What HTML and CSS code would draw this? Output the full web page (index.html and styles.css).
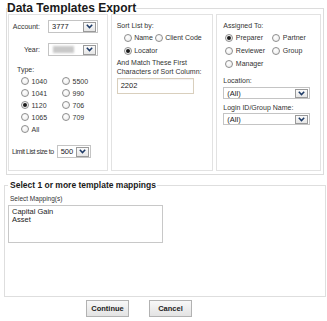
FILE: index.html
```html
<!DOCTYPE html>
<html>
<head>
<meta charset="utf-8">
<link rel="stylesheet" href="styles.css">
</head>
<body>
<div class="page">
  <fieldset class="main">
    <legend>Data Templates Export</legend>
    <div class="cols">
      <div class="col col1">
        <div class="frow">
          <span class="flbl">Account:</span>
          <div class="sel w50"><span class="val">3777</span><span class="dd"><svg width="7" height="5" viewBox="0 0 7 5"><polyline points="0.8,0.8 3.5,3.6 6.2,0.8" fill="none" stroke="#1d3a66" stroke-width="1.5"/></svg></span></div>
        </div>
        <div class="frow yr">
          <span class="flbl">Year:</span>
          <div class="sel w50"><span class="blur"></span><span class="dd"><svg width="7" height="5" viewBox="0 0 7 5"><polyline points="0.8,0.8 3.5,3.6 6.2,0.8" fill="none" stroke="#1d3a66" stroke-width="1.5"/></svg></span></div>
        </div>
        <div class="typelbl">Type:</div>
        <div class="rgrid">
          <label class="rad"><span class="dot"></span>1040</label>
          <label class="rad"><span class="dot"></span>5500</label>
          <label class="rad"><span class="dot"></span>1041</label>
          <label class="rad"><span class="dot"></span>990</label>
          <label class="rad"><span class="dot on"></span>1120</label>
          <label class="rad"><span class="dot"></span>706</label>
          <label class="rad"><span class="dot"></span>1065</label>
          <label class="rad"><span class="dot"></span>709</label>
          <label class="rad"><span class="dot"></span>All</label>
        </div>
        <div class="limit">
          <span class="limlbl">Limit List size to</span>
          <div class="sel w34"><span class="val">500</span><span class="dd"><svg width="7" height="5" viewBox="0 0 7 5"><polyline points="0.8,0.8 3.5,3.6 6.2,0.8" fill="none" stroke="#1d3a66" stroke-width="1.5"/></svg></span></div>
        </div>
      </div>
      <div class="col col2">
        <div class="hlbl">Sort List by:</div>
        <div class="rgrid2">
          <label class="rad r13"><span class="dot"></span>Name</label>
          <label class="rad r13"><span class="dot"></span>Client Code</label>
          <label class="rad r13"><span class="dot on"></span>Locator</label>
        </div>
        <div class="para">And Match These First<br>Characters of Sort Column:</div>
        <div class="txt">2202</div>
      </div>
      <div class="col col3">
        <div class="hlbl">Assigned To:</div>
        <div class="rgrid3">
          <label class="rad r13"><span class="dot on"></span>Preparer</label>
          <label class="rad r13"><span class="dot"></span>Partner</label>
          <label class="rad r13"><span class="dot"></span>Reviewer</label>
          <label class="rad r13"><span class="dot"></span>Group</label>
          <label class="rad r13"><span class="dot"></span>Manager</label>
        </div>
        <div class="slbl loc">Location:</div>
        <div class="sel w87 h12"><span class="val">(All)</span><span class="dd"><svg width="7" height="5" viewBox="0 0 7 5"><polyline points="0.8,0.8 3.5,3.6 6.2,0.8" fill="none" stroke="#1d3a66" stroke-width="1.5"/></svg></span></div>
        <div class="slbl login">Login ID/Group Name:</div>
        <div class="sel w87 h12"><span class="val">(All)</span><span class="dd"><svg width="7" height="5" viewBox="0 0 7 5"><polyline points="0.8,0.8 3.5,3.6 6.2,0.8" fill="none" stroke="#1d3a66" stroke-width="1.5"/></svg></span></div>
      </div>
    </div>
  </fieldset>
  <fieldset class="maps">
    <legend>Select 1 or more template mappings</legend>
    <div class="maplbl">Select Mapping(s)</div>
    <div class="listbox">
      <div>Capital Gain</div>
      <div>Asset</div>
    </div>
  </fieldset>
  <div class="actions">
    <button class="btn">Continue</button>
    <button class="btn">Cancel</button>
  </div>
</div>
</body>
</html>
```

FILE: styles.css
```css
* { box-sizing: border-box; }
body {
  margin: 0;
  background: #fff;
  font-family: "Liberation Sans", Arial, sans-serif;
  color: #333;
  font-size: 7px;
}
.page { width: 327px; padding-top: 1px; }
fieldset { margin: 0; min-width: 0; }

.main {
  margin-left: 6px;
  width: 318px;
  border: 1px solid #dcdcdc;
  padding: 0 2px 3px 1px;
}
.main > legend {
  font-size: 12px;
  font-weight: bold;
  line-height: 14px;
  padding: 0;
  margin-left: -1px;
  color: #1a1a1a;
}
.cols {
  display: flex;
  gap: 3px;
  margin-top: -1px;
  height: 157px;
}
.col { border: 1px solid #e2e2e2; }
.col1 { width: 100px; padding: 5px 0 0 0; }
.col2 { width: 103px; padding: 5px 0 0 5px; }
.col3 { width: 105px; padding: 5px 0 0 6px; }

/* select box */
.sel {
  display: flex;
  align-items: center;
  justify-content: space-between;
  height: 13px;
  border: 1px solid #c4c4c4;
  background: #fff;
  padding: 0 1px 0 3px;
}
.sel .val { font-size: 7.5px; color: #222; line-height: 9px; }
.dd {
  width: 13px;
  height: 10px;
  border: 1px solid #9a9a9a;
  background: linear-gradient(#fbfbfb, #e6e6e6);
  display: flex;
  align-items: center;
  justify-content: center;
}
.dd svg { display: block; }
.h12 { height: 12px; }
.h12 .dd { height: 9px; }
.w50 { width: 50px; }
.w34 { width: 34px; }
.w87 { width: 87px; }
.blur {
  width: 21px;
  height: 7px;
  margin-left: 1px;
  background: #c8c8c8;
  filter: blur(1.2px);
}

/* col1 */
.frow { display: flex; align-items: center; height: 13px; }
.flbl { width: 31px; text-align: right; margin-right: 8px; line-height: 10px; }
.yr { margin-top: 10px; }
.typelbl { margin-top: 9px; padding-left: 8px; line-height: 10px; }
.rgrid {
  display: grid;
  grid-template-columns: 41px auto;
  grid-auto-rows: 12px;
  padding-left: 12px;
}
.rad { display: flex; align-items: center; gap: 2.5px; line-height: 9px; }
.r13 { height: 13px; }
.dot {
  width: 8px;
  height: 8px;
  border-radius: 50%;
  border: 1px solid #8e8e8e;
  background: radial-gradient(circle at 40% 35%, #ffffff, #e9e9e9);
  display: flex;
  align-items: center;
  justify-content: center;
  flex: none;
}
.dot.on::after {
  content: "";
  width: 4px;
  height: 4px;
  border-radius: 50%;
  background: #1b1b1b;
}
.limit { display: flex; align-items: center; margin-top: 10px; padding-left: 3px; }
.limlbl { letter-spacing: -0.45px; margin-right: 3px; line-height: 10px; }

/* col2 */
.hlbl { line-height: 11px; }
.rgrid2 {
  display: grid;
  grid-template-columns: 31px auto;
  padding-left: 7px;
}
.para { margin-top: 2px; line-height: 8.5px; }
.txt {
  margin-top: 2px;
  width: 77px;
  height: 16px;
  border: 1px solid #d9cfbd;
  box-shadow: inset 0 1px 1px rgba(0,0,0,0.06);
  padding-left: 3px;
  font-size: 7.5px;
  line-height: 14px;
  color: #222;
}

/* col3 */
.rgrid3 {
  display: grid;
  grid-template-columns: 47px auto;
  padding-left: 2px;
}
.slbl { line-height: 10px; }
.loc { margin-top: 6px; margin-bottom: 1px; }
.login { margin-top: 4px; margin-bottom: 0; }

/* mappings */
.maps {
  margin: 5px 0 0 4px;
  width: 322px;
  height: 117px;
  border: 1px solid #dedede;
  padding: 0 3px 0 3px;
}
.maps > legend {
  font-size: 8.5px;
  font-weight: bold;
  line-height: 11px;
  padding: 0 1px 0 2px;
  color: #1a1a1a;
}
.maplbl { margin-top: 3px; padding-left: 2px; line-height: 10px; font-size: 6.5px; }
.listbox {
  margin-top: 1px;
  width: 155px;
  height: 38px;
  border: 1px solid #c8c8c8;
  padding: 1.5px 3px;
  font-size: 7.5px;
  line-height: 8.5px;
  color: #222;
}

.actions { display: flex; gap: 20px; padding: 3px 0 0 86px; }
.btn {
  width: 43px;
  height: 17px;
  border: 1px solid #b2b2b2;
  background: linear-gradient(#f8f8f8, #e3e3e3);
  font-family: "Liberation Sans", Arial, sans-serif;
  font-weight: bold;
  font-size: 7.5px;
  color: #222;
  padding: 0;
}
```
